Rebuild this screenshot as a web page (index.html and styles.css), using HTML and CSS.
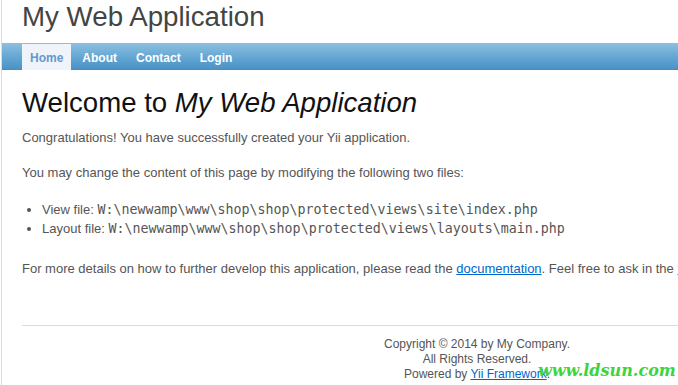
FILE: index.html
```html
<!DOCTYPE html>
<html lang="en">
<head>
    <meta charset="UTF-8">
    <title>My Web Application</title>
    <link rel="stylesheet" href="styles.css">
</head>
<body>
    <div class="page">
        <div class="header">
            <div class="logo">My Web Application</div>
        </div>

        <div class="mainmenu">
            <ul>
                <li class="active"><a href="#">Home</a></li>
                <li><a href="#">About</a></li>
                <li><a href="#">Contact</a></li>
                <li><a href="#">Login</a></li>
            </ul>
        </div>

        <div class="content">
            <h1>Welcome to <i>My Web Application</i></h1>

            <p>Congratulations! You have successfully created your Yii application.</p>

            <p>You may change the content of this page by modifying the following two files:</p>
            <ul class="files">
                <li>View file: <code>W:\newwamp\www\shop\shop\protected\views\site\index.php</code></li>
                <li>Layout file: <code>W:\newwamp\www\shop\shop\protected\views\layouts\main.php</code></li>
            </ul>

            <p>For more details on how to further develop this application, please read the <a href="#">documentation</a>. Feel free to ask in the <a href="#">forum</a>, should you have any questions.</p>
        </div>

        <div class="footer">
            Copyright &copy; 2014 by My Company.<br>
            All Rights Reserved.<br>
            Powered by <a href="#">Yii Framework</a>.
        </div>
    </div>

    <div class="watermark">www.ldsun.com</div>
</body>
</html>
```

FILE: styles.css
```css
* {
    box-sizing: border-box;
}

html, body {
    overflow: hidden;
}

body {
    margin: 0;
    padding: 0 0 0 1px;
    background: #fff;
    color: #555;
    font: normal 13px "Liberation Sans", Arial, sans-serif;
}

.page {
    width: 952px;
    border-left: 1px solid #c9e0ed;
    border-right: 1px solid #c9e0ed;
    background: #fff;
}

.header {
    padding: 1px 20px 10px;
}

.logo {
    font-size: 27.7px;
    line-height: 32px;
    color: #444;
}

.mainmenu {
    height: 27px;
    background: linear-gradient(#8cc0e0, #5a9fcf 70%, #4d93c6);
    border-bottom: 1px solid #4a8cbd;
}

.mainmenu ul {
    list-style: none;
    margin: 0;
    padding: 1px 20px 0;
    display: flex;
    gap: 3px;
}

.mainmenu a {
    display: block;
    padding: 2px 8px 0;
    height: 26px;
    line-height: 25px;
    font-size: 12px;
    font-weight: bold;
    color: #fff;
    text-decoration: none;
}

.mainmenu .active a {
    background: #eff4fa;
    color: #6399cd;
}

.content {
    padding: 17px 20px 21px;
}

h1 {
    margin: 0 0 9px;
    font-size: 27.6px;
    line-height: 32px;
    font-weight: normal;
    color: #111;
}

p {
    margin: 0 0 16px;
    line-height: 19px;
}

.content p:last-child {
    margin-bottom: 0;
}

.files {
    margin: 18px 0 21px;
    padding-left: 20px;
    line-height: 19px;
}

code {
    font-family: "DejaVu Sans Mono", monospace;
    font-size: 13.3px;
}

a {
    color: #06c;
}

.footer {
    margin: 26px 20px 10px;
    padding: 11px 10px;
    border-top: 1px solid #c9e0ed;
    text-align: center;
    font-size: 12px;
    line-height: 15px;
}

.watermark {
    position: absolute;
    left: 538px;
    top: 361px;
    font-family: "DejaVu Serif", serif;
    font-weight: bold;
    font-style: italic;
    font-size: 16px;
    color: #3ed43e;
}
```
